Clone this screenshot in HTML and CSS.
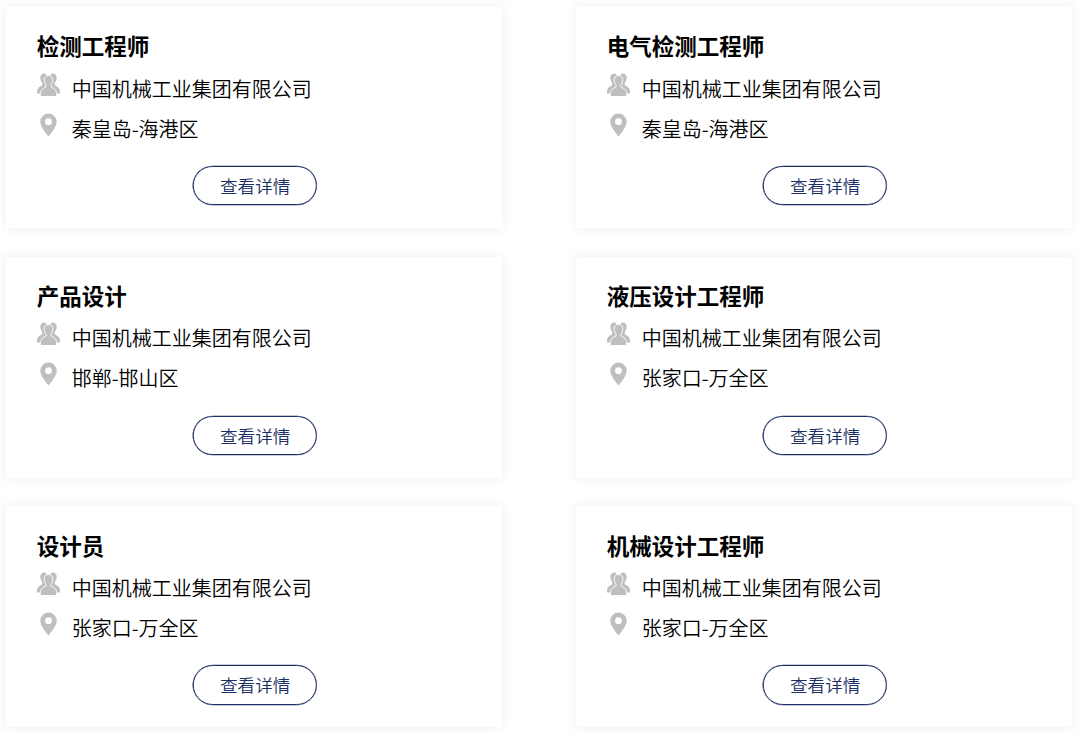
FILE: index.html
```html
<!DOCTYPE html>
<html lang="zh-CN">

<head>
  <meta charset="UTF-8">
  <meta name="viewport" content="width=device-width, initial-scale=1.0">
  <title>招聘职位</title>
  <link rel="stylesheet" href="styles.css">
</head>

<body>
  <svg class="sprite" width="0" height="0">
    <symbol id="people" viewBox="0 0 23 24">
      <path d="M8.500 .7C5.500 0 3.200 1.800 3.300 4.800c.1 2 .8 3.700 1.800 5l.2 2.500C2 13.800 0 15.500 0 18.500v2h4L10 13V3z" />
      <path d="M14.500 .7c3-.7 5.300 1.100 5.200 4.100-.1 2-.8 3.700-1.800 5l-.2 2.500c3.300 1.500 5.300 3.200 5.300 6.200v2h-4L13 13V3z" />
      <path d="M11.500 2.500C8.700 2.500 7 4.400 7.200 7c.2 2.300.9 4 1.900 5.200v1.600C6 15.200 3.400 17.300 3.400 20.500v3h16.200v-3c0-3.200-2.600-5.300-5.700-6.700v-1.600c1-1.200 1.700-2.900 1.900-5.200.2-2.600-1.500-4.500-4.300-4.500z" stroke="#fff" stroke-width=".9" />
    </symbol>
    <symbol id="pin" viewBox="0 0 17 24">
      <path fill-rule="evenodd" d="M8.500 .5A8.200 8.200 0 0 0 .3 8.700C.3 13.500 5.500 19.500 8.500 23.500c3-4 8.200-10 8.200-14.800A8.200 8.200 0 0 0 8.500 .5zm0 4.800a3.400 3.400 0 1 1 0 6.800 3.400 3.400 0 0 1 0-6.800z" />
    </symbol>
  </svg>

  <ul id="jobs" class="jobs"></ul>

  <script>
    const company = '中国机械工业集团有限公司'
    const jobs = [
      ['检测工程师', '秦皇岛-海港区'],
      ['电气检测工程师', '秦皇岛-海港区'],
      ['产品设计', '邯郸-邯山区'],
      ['液压设计工程师', '张家口-万全区'],
      ['设计员', '张家口-万全区'],
      ['机械设计工程师', '张家口-万全区']
    ]

    document.getElementById('jobs').innerHTML = jobs.map(([title, place]) => `
      <li class="job">
        <h2>${title}</h2>
        <p><svg class="icon people"><use href="#people"/></svg><span>${company}</span></p>
        <p><svg class="icon pin"><use href="#pin"/></svg><span>${place}</span></p>
        <a class="detail" href="#">查看详情</a>
      </li>`).join('')
  </script>
</body>

</html>
```
FILE: styles.css
```css
body {
  margin: 0;
  background-color: #fff;
  color: #000;
  font-family: "Noto Sans CJK SC", sans-serif;
}

.sprite {
  display: block;
}

.jobs {
  display: grid;
  grid-template-columns: 496px 496px;
  grid-auto-rows: 221px;
  gap: 28.700px 74px;
  box-sizing: border-box;
  height: 732px;
  margin: 0;
  padding: 7px 6.400px 0;
  list-style: none;
  overflow: hidden;
}

.job {
  box-sizing: border-box;
  padding: 18.400px 30.300px 0;
  box-shadow: 0 0 12px rgba(0, 0, 0, .075);
}

.job h2 {
  margin: 0 0 1.300px;
  font-size: 22.500px;
  line-height: 40px;
}

.job p {
  display: flex;
  margin: 0;
  font-size: 20px;
  font-weight: 350;
  line-height: 40px;
}

.job span {
  padding-top: 2px;
  margin-bottom: -2px;
}

.icon {
  fill: #bfbfbf;
}

.people {
  width: 23px;
  height: 24px;
  margin: 6px 12px 0 0;
}

.pin {
  width: 17px;
  height: 24px;
  margin: 6px 15px 0 3px;
}

.detail {
  box-sizing: border-box;
  display: block;
  width: 124px;
  height: 39.500px;
  margin: 19.200px auto 0;
  border: 1px solid #1c2f64;
  border-radius: 20px;
  box-shadow: 0 0 0 .300px #1c2f64;
  color: #1c2f64;
  font-size: 17.600px;
  font-weight: 350;
  line-height: 38px;
  text-align: center;
  text-decoration: none;
  transform: translateX(.8px);
}
```
